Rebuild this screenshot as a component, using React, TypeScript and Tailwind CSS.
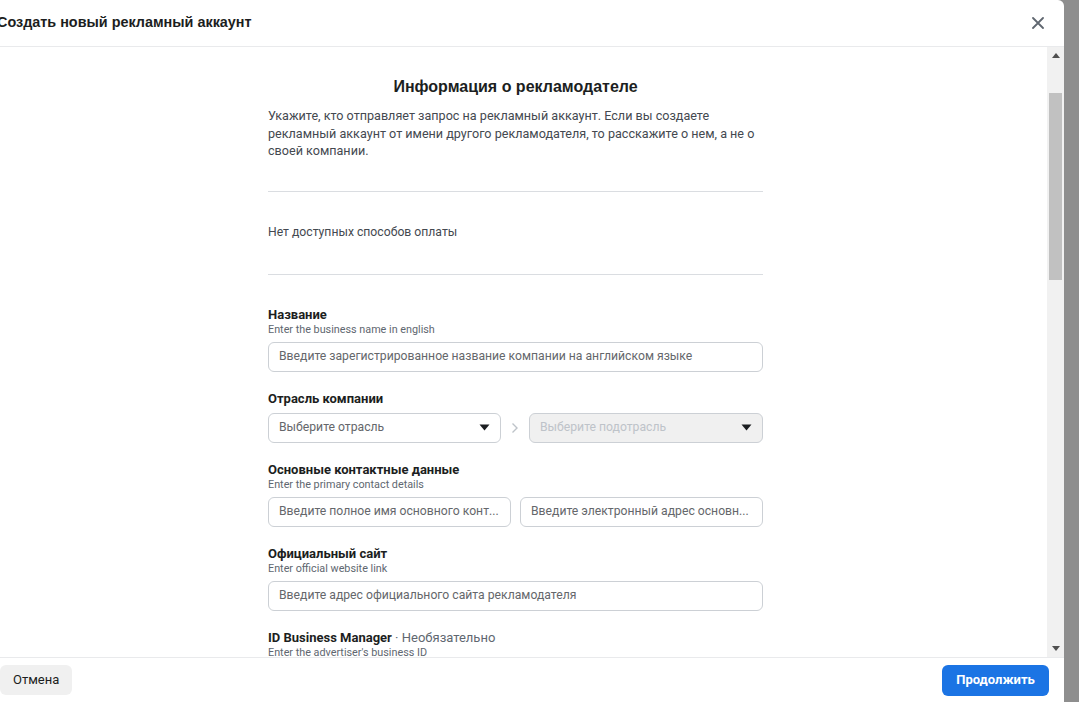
import React from "react";

const font = "font-['Roboto','Liberation_Sans',sans-serif]";

function Caret() {
  return (
    <svg width="11" height="7" viewBox="0 0 11 7" className="flex-shrink-0">
      <path d="M0.5 0.5 L10.5 0.5 L5.5 6.5 Z" fill="#1c1e21" />
    </svg>
  );
}

function Field({
  label,
  hint,
  optional,
  children,
}: {
  label: string;
  hint?: string;
  optional?: boolean;
  children?: React.ReactNode;
}) {
  return (
    <div className="flex flex-col">
      <div className="text-[13px] leading-[16px] font-bold text-[#1c1e21]">
        {label}
        {optional && <span className="font-normal text-[#606770]"> · Необязательно</span>}
      </div>
      {hint && <div className="text-[10.8px] leading-[14px] text-[#606770]">{hint}</div>}
      {children}
    </div>
  );
}

function TextInput({ placeholder }: { placeholder: string }) {
  return (
    <div className="flex-1 min-w-0 h-[30px] border border-[#ccd0d5] rounded-[6px] px-[10px] flex items-center text-[12.2px] text-[#65676b] whitespace-nowrap overflow-hidden">
      {placeholder}
    </div>
  );
}

export default function App() {
  return (
    <div className={`flex w-[1079px] h-[702px] bg-[#8e8e8e] overflow-hidden ${font}`}>
      <div className="w-[1064px] h-full bg-white rounded-tr-[6px] flex flex-col">
        {/* Header */}
        <div className="h-[47px] flex items-center justify-between border-b border-[#e9eaec] flex-shrink-0">
          <div className="-ml-[3px] text-[14.4px] font-bold text-[#1c1e21] font-['Liberation_Sans',Arial,sans-serif]">
            Создать новый рекламный аккаунт
          </div>
          <svg width="12" height="12" viewBox="0 0 12 12" className="mr-[20px]">
            <path d="M1 1 L11 11 M11 1 L1 11" stroke="#606770" strokeWidth="1.8" strokeLinecap="round" />
          </svg>
        </div>

        {/* Body */}
        <div className="flex-1 flex min-h-0">
          <div className="flex-1 overflow-hidden">
            <div className="ml-[268px] w-[495px] pt-[30px] flex flex-col">
              <h2 className="text-center text-[16px] leading-[20px] font-bold text-[#1c1e21] font-['Liberation_Sans',Arial,sans-serif]">
                Информация о рекламодателе
              </h2>
              <p className="mt-[10px] text-[12.6px] leading-[17.5px] text-[#444950]">
                Укажите, кто отправляет запрос на рекламный аккаунт. Если вы создаете рекламный аккаунт от имени другого
                рекламодателя, то расскажите о нем, а не о своей компании.
              </p>
              <div className="mt-[31px] border-t border-[#dadde1]" />
              <div className="h-[82px] flex items-center text-[12.2px] text-[#444950]">Нет доступных способов оплаты</div>
              <div className="border-t border-[#dadde1]" />

              <div className="mt-[32px] flex flex-col gap-[19px]">
                <Field label="Название" hint="Enter the business name in english">
                  <div className="mt-[5px] flex">
                    <TextInput placeholder="Введите зарегистрированное название компании на английском языке" />
                  </div>
                </Field>

                <Field label="Отрасль компании">
                  <div className="mt-[6px] flex items-center">
                    <div className="w-[233px] h-[30px] border border-[#ccd0d5] rounded-[6px] px-[10px] flex items-center justify-between text-[12.2px] text-[#65676b]">
                      Выберите отрасль
                      <Caret />
                    </div>
                    <div className="w-[28px] flex justify-center">
                      <svg width="8" height="12" viewBox="0 0 8 12">
                        <path d="M1.5 1.5 L6 6 L1.5 10.5" stroke="#bec3c9" strokeWidth="1.4" fill="none" />
                      </svg>
                    </div>
                    <div className="w-[234px] h-[30px] border border-[#ccd0d5] bg-[#f0f0f0] rounded-[6px] px-[10px] flex items-center justify-between text-[12.2px] text-[#bec3c9]">
                      Выберите подотрасль
                      <Caret />
                    </div>
                  </div>
                </Field>

                <Field label="Основные контактные данные" hint="Enter the primary contact details">
                  <div className="mt-[5px] flex gap-[9px]">
                    <TextInput placeholder="Введите полное имя основного конт..." />
                    <TextInput placeholder="Введите электронный адрес основн..." />
                  </div>
                </Field>

                <Field label="Официальный сайт" hint="Enter official website link">
                  <div className="mt-[5px] flex">
                    <TextInput placeholder="Введите адрес официального сайта рекламодателя" />
                  </div>
                </Field>

                <Field label="ID Business Manager" optional hint="Enter the advertiser's business ID" />
              </div>
            </div>
          </div>

          {/* Scrollbar */}
          <div className="w-[17px] bg-[#f1f1f1] flex flex-col items-center">
            <div className="h-[17px] flex items-center justify-center">
              <svg width="8" height="5" viewBox="0 0 8 5">
                <path d="M0 5 L4 0 L8 5 Z" fill="#505050" />
              </svg>
            </div>
            <div className="mt-[29px] w-[13px] h-[187px] bg-[#c1c1c1]" />
            <div className="flex-1" />
            <div className="h-[17px] flex items-center justify-center">
              <svg width="8" height="5" viewBox="0 0 8 5">
                <path d="M0 0 L8 0 L4 5 Z" fill="#505050" />
              </svg>
            </div>
          </div>
        </div>

        {/* Footer */}
        <div className="h-[45px] flex-shrink-0 border-t border-[#e9eaec] flex items-center justify-between pr-[15px]">
          <button className="h-[30px] px-[13px] rounded-[6px] bg-[#f0f0f0] text-[13px] text-[#1c1e21]">Отмена</button>
          <button className="h-[31px] w-[107px] rounded-[6px] bg-[#1b74e4] text-[13px] font-bold text-white">
            Продолжить
          </button>
        </div>
      </div>
    </div>
  );
}
